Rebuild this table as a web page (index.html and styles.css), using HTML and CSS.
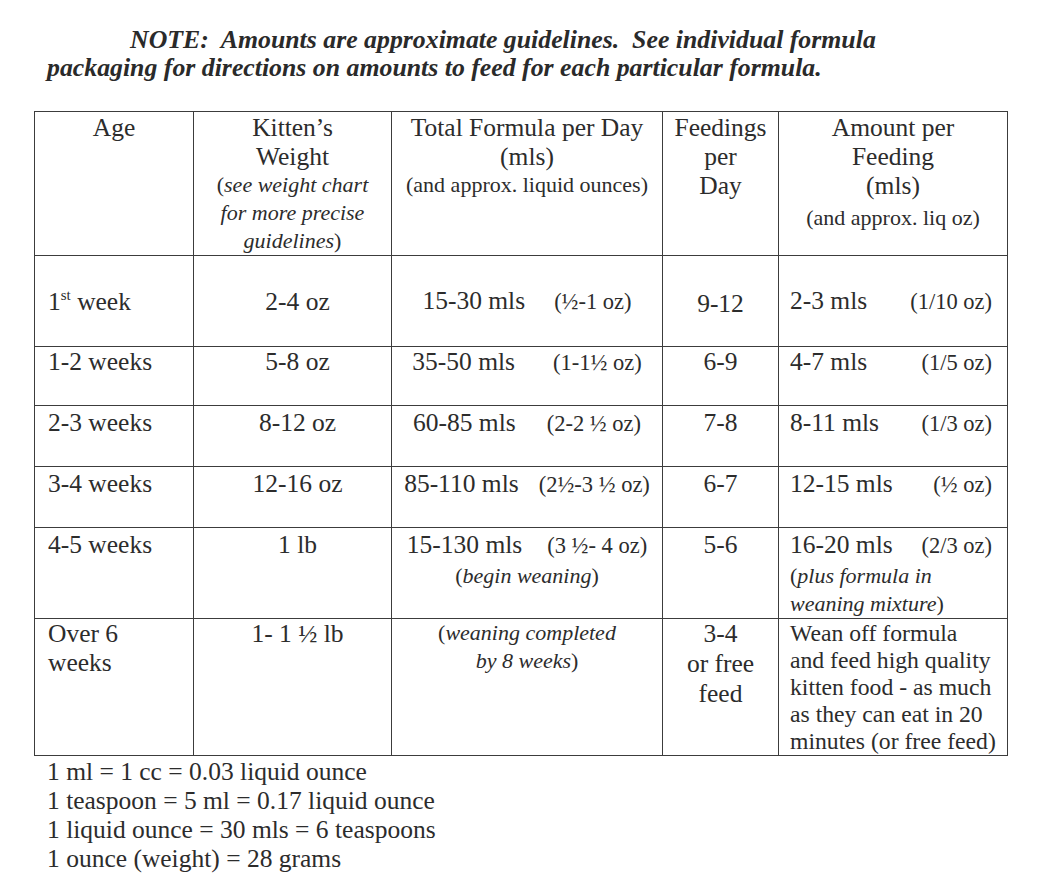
FILE: index.html
```html
<!DOCTYPE html>
<html lang="en">
<head>
<meta charset="utf-8">
<title>Kitten Formula Feeding Chart</title>
<link rel="stylesheet" href="styles.css">
</head>
<body>
<div class="page">
  <p class="note">NOTE:&nbsp; Amounts are approximate guidelines.&nbsp; See individual formula packaging for directions on amounts to feed for each particular formula.</p>

  <table class="chart">
    <colgroup>
      <col class="c-age"><col class="c-weight"><col class="c-total"><col class="c-feed"><col class="c-amount">
    </colgroup>
    <tr class="r-head">
      <td class="center">Age</td>
      <td class="center">Kitten’s<br>Weight<div class="small">(<i>see weight chart<br>for more precise<br>guidelines</i>)</div></td>
      <td class="center">Total Formula per Day<br>(mls)<div class="small">(and approx. liquid ounces)</div></td>
      <td class="center">Feedings<br>per<br>Day</td>
      <td class="center">Amount per<br>Feeding<br>(mls)<div class="small lower">(and approx. liq oz)</div></td>
    </tr>
    <tr class="r1 middle">
      <td class="age">1<sup>st</sup> week</td>
      <td class="center weight">2-4 oz</td>
      <td class="center">15-30 mls<span class="oz g1">(½-1 oz)</span></td>
      <td class="center feed">9-12</td>
      <td class="amount"><div class="split"><span>2-3 mls</span><span class="oz">(1/10 oz)</span></div></td>
    </tr>
    <tr class="r2">
      <td class="age">1-2 weeks</td>
      <td class="center weight">5-8 oz</td>
      <td class="center">35-50 mls<span class="oz g2">(1-1½ oz)</span></td>
      <td class="center">6-9</td>
      <td class="amount"><div class="split"><span>4-7 mls</span><span class="oz">(1/5 oz)</span></div></td>
    </tr>
    <tr class="r3">
      <td class="age">2-3 weeks</td>
      <td class="center weight">8-12 oz</td>
      <td class="center">60-85 mls<span class="oz g3">(2-2 ½ oz)</span></td>
      <td class="center">7-8</td>
      <td class="amount"><div class="split"><span>8-11 mls</span><span class="oz">(1/3 oz)</span></div></td>
    </tr>
    <tr class="r4">
      <td class="age">3-4 weeks</td>
      <td class="center weight">12-16 oz</td>
      <td class="center">85-110 mls<span class="oz g4">(2½-3 ½ oz)</span></td>
      <td class="center">6-7</td>
      <td class="amount"><div class="split"><span>12-15 mls</span><span class="oz">(½ oz)</span></div></td>
    </tr>
    <tr class="r5">
      <td class="age">4-5 weeks</td>
      <td class="center weight">1 lb</td>
      <td class="center">15-130 mls<span class="oz g5">(3 ½- 4 oz)</span><div class="small sub">(<i>begin weaning</i>)</div></td>
      <td class="center">5-6</td>
      <td class="amount"><div class="split"><span>16-20 mls</span><span class="oz">(2/3 oz)</span></div><div class="small sub">(<i>plus formula in<br>weaning mixture</i>)</div></td>
    </tr>
    <tr class="r6">
      <td class="age">Over 6<br>weeks</td>
      <td class="center weight">1- 1 ½ lb</td>
      <td class="center"><div class="small">(<i>weaning completed<br>by 8 weeks</i>)</div></td>
      <td class="center loose">3-4<br>or free<br>feed</td>
      <td class="amount dense">Wean off formula<br>and feed high quality<br>kitten food - as much<br>as they can eat in 20<br>minutes (or free feed)</td>
    </tr>
  </table>

  <div class="conversions">
    <div>1 ml = 1 cc = 0.03 liquid ounce</div>
    <div>1 teaspoon = 5 ml = 0.17 liquid ounce</div>
    <div>1 liquid ounce = 30 mls = 6 teaspoons</div>
    <div>1 ounce (weight) = 28 grams</div>
  </div>
</div>
</body>
</html>
```

FILE: styles.css
```css
html, body {
  margin: 0;
  padding: 0;
  background: #ffffff;
}

body {
  font-family: "Liberation Serif", "Times New Roman", serif;
  color: #2c2c2c;
}

.page {
  padding: 26px 0 0 34px;
  width: 973px;
}

.note {
  margin: 0 0 0 13px;
  width: 880px;
  text-indent: 83px;
  font-size: 25.8px;
  line-height: 28px;
  font-weight: bold;
  font-style: italic;
  color: #2a2a2a;
}

.chart {
  margin-top: 29px;
  border-collapse: collapse;
  width: 973px;
  table-layout: fixed;
  font-size: 25.5px;
  line-height: 29px;
}

.c-age { width: 159px; }
.c-weight { width: 198px; }
.c-total { width: 271px; }
.c-feed { width: 116px; }
.c-amount { width: 229px; }

.chart td {
  border: 1.5px solid #3c3c3c;
  vertical-align: top;
  padding: 2px 4px 0 4px;
  white-space: nowrap;
}

.chart .r-head td { padding-top: 1px; }

.chart .middle td { vertical-align: middle; padding-top: 0; }

.chart .r2 td { padding-top: 0; }
.chart .r6 td { padding-top: 0; }

.r-head { height: 144px; }
.r1 { height: 91px; }
.r2 { height: 59px; }
.r3 { height: 61px; }
.r4 { height: 61px; }
.r5 { height: 90px; }
.r6 { height: 136px; }

.center { text-align: center; }

.chart td.age {
  text-align: left;
  padding-left: 13px;
}

.chart td.weight { padding-left: 14px; }

.chart td.amount {
  text-align: left;
  padding-left: 11px;
  padding-right: 15px;
}

.small {
  font-size: 22px;
  line-height: 28px;
}

.lower { margin-top: 4px; }

.sub { margin-top: 2px; }

.oz { font-size: 22.5px; }

.g1 { margin-left: 29px; }
.g2 { margin-left: 38px; }
.g3 { margin-left: 31px; }
.g4 { margin-left: 20px; }
.g5 { margin-left: 25px; }

sup {
  font-size: 15px;
  vertical-align: 10px;
  line-height: 0;
}

.split {
  display: flex;
  justify-content: space-between;
  align-items: baseline;
}

.chart .middle td.feed { padding-top: 4px; }

.chart td.loose { line-height: 30px; padding-top: 0; }

.chart td.dense {
  font-size: 23.7px;
  line-height: 27px;
  padding-top: 1px;
}

.conversions {
  margin: 1px 0 0 13px;
  font-size: 25.5px;
  line-height: 29px;
}
```
